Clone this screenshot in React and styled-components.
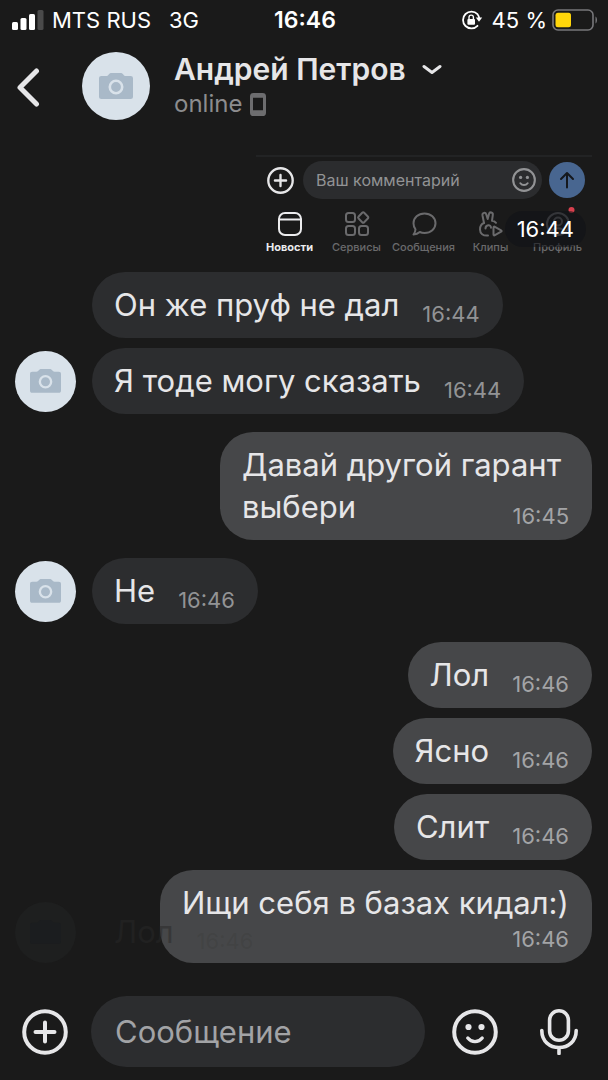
import React, { useState } from 'react';
import styled, { createGlobalStyle } from 'styled-components';

const GlobalStyle = createGlobalStyle`
  * {
    box-sizing: border-box;
  }
  body {
    margin: 0;
    background: #1a1a1a;
    color: #e6e6e8;
    font-family: Inter, "Liberation Sans", sans-serif;
  }
  button {
    padding: 0;
    border: none;
    background: none;
    color: inherit;
    font: inherit;
    cursor: pointer;
  }
  svg {
    display: block;
    flex-shrink: 0;
  }
`;

const Page = styled.div`
  display: flex;
  flex-direction: column;
  min-height: 100vh;
`;

const StatusBar = styled.div`
  display: grid;
  grid-template-columns: 1fr auto 1fr;
  align-items: center;
  height: 40px;
  padding: 0 10px 0 12px;
  color: #fff;
  font-size: 22px;
`;

const StatusGroup = styled.div`
  display: flex;
  align-items: center;
  justify-content: ${props => (props.$end ? 'flex-end' : 'flex-start')};
  gap: ${props => (props.$end ? 5 : 8)}px;
  white-space: nowrap;
`;

const Network = styled.span`
  margin-left: 10px;
`;

const Percent = styled.span`
  margin-left: 4px;
`;

const Clock = styled.span`
  font-size: 23px;
  font-weight: 600;
`;

const Header = styled.header`
  display: flex;
  align-items: center;
  height: 92px;
  padding: 0 16px;
`;

const BackButton = styled.button`
  width: 26px;
  margin-right: 40px;
`;

const Avatar = styled.div`
  display: flex;
  align-items: center;
  justify-content: center;
  flex-shrink: 0;
  width: ${props => props.$size}px;
  height: ${props => props.$size}px;
  border-radius: 50%;
  background: #d9e2ea;
  color: #a9b9c8;
`;

const Peer = styled.div`
  display: flex;
  flex-direction: column;
  margin-left: 24px;
`;

const PeerName = styled.button`
  display: flex;
  align-items: center;
  gap: 16px;
  font-size: 30px;
  font-weight: 600;
  line-height: 36px;
`;

const PeerStatus = styled.div`
  display: flex;
  align-items: center;
  gap: 8px;
  color: #8c8c8e;
  font-size: 24px;
  line-height: 34px;
`;

const History = styled.main`
  display: flex;
  flex: 1;
  flex-direction: column;
  gap: 18px;
  padding: 23px 16px 33px 15px;
`;

const Group = styled.section`
  display: flex;
  flex-direction: column;
  gap: 10px;
`;

const Row = styled.div`
  display: flex;
  align-items: center;
  justify-content: ${props => (props.$out ? 'flex-end' : 'flex-start')};
  gap: 16px;
`;

const AvatarSlot = styled.div`
  flex-shrink: 0;
  width: 61px;
`;

const Bubble = styled.div`
  display: flow-root;
  min-width: ${props => (props.$multiline ? '372px' : 'auto')};
  max-width: 440px;
  padding: 12px 23px 12px 22px;
  border-radius: 33px;
  background: ${props => (props.$out ? '#464749' : '#2c2d2f')};
  font-size: 31px;
  line-height: 42px;
  white-space: pre-line;
`;

const Time = styled.time`
  float: right;
  clear: both;
  margin: ${props => (props.$below ? 3 : 18)}px 0 0 23px;
  color: ${props => (props.$out ? '#a3a4a6' : '#929395')};
  font-size: 22px;
  line-height: 24px;
`;

const LastRow = styled.div`
  position: relative;
  ${Bubble} {
    max-width: 432px;
  }
`;

// previous message of the peer, almost faded out under the last one
const Ghost = styled.div`
  position: absolute;
  left: 0;
  bottom: -2px;
  ${Avatar} {
    background: #1e1f1f;
    color: #1b1d1f;
  }
  ${Bubble} {
    background: none;
    color: rgba(40, 40, 40, 0.5);
  }
  ${Time} {
    color: rgba(40, 40, 40, 0.15);
  }
  circle {
    stroke: none;
  }
`;

const Shot = styled.div`
  position: relative;
  align-self: flex-end;
  width: 336px;
  border-top: 2px solid #222324;
`;

const ShotForm = styled.div`
  display: flex;
  align-items: center;
  padding: 4px 7px 0 10px;
`;

const ShotField = styled.div`
  display: flex;
  flex: 1;
  align-items: center;
  min-width: 0;
  height: 38px;
  margin: 0 7px 0 9px;
  padding: 0 6px 0 13px;
  border-radius: 19px;
  background: #2b2c2e;
  color: #929395;
`;

const ShotInput = styled.input`
  flex: 1;
  min-width: 0;
  padding: 0;
  border: none;
  outline: none;
  background: none;
  color: inherit;
  font: 16px Inter, "Liberation Sans", sans-serif;
  &::placeholder {
    color: #929395;
    opacity: 1;
  }
`;

const SendButton = styled.button`
  display: flex;
  align-items: center;
  justify-content: center;
  flex-shrink: 0;
  width: 36px;
  height: 36px;
  border-radius: 50%;
  background: #486690;
  color: #15181d;
`;

const Tabs = styled.nav`
  display: grid;
  grid-template-columns: repeat(5, 67px);
  margin-top: 12px;
`;

const Tab = styled.a`
  display: flex;
  flex-direction: column;
  align-items: center;
  gap: 3px;
  color: ${props => (props.$active ? '#ececee' : '#6a6a6c')};
  font-size: 11px;
  font-weight: ${props => (props.$active ? 700 : 500)};
  line-height: 14px;
  text-decoration: none;
`;

const ShotTime = styled.time`
  position: absolute;
  right: 6px;
  bottom: 7px;
  padding: 0 12px;
  border-radius: 18px;
  background: rgba(16, 18, 23, 0.6);
  color: #fff;
  font-size: 22px;
  line-height: 36px;
`;

const Composer = styled.form`
  display: flex;
  align-items: center;
  gap: 23px;
  padding: 0 26px 13px 22px;
`;

const ComposerActions = styled.div`
  display: flex;
  gap: 38px;
`;

const MessageInput = styled.input`
  flex: 1;
  min-width: 0;
  height: 71px;
  margin-right: 4px;
  padding: 0 24px;
  border: none;
  border-radius: 36px;
  outline: none;
  background: #2c2d2f;
  color: #e6e6e8;
  font: 31px Inter, "Liberation Sans", sans-serif;
  &::placeholder {
    color: #a2a3a6;
    opacity: 1;
  }
`;

const IconButton = styled.button`
  display: flex;
  align-items: center;
  justify-content: center;
  flex-shrink: 0;
  width: ${props => props.$size || 46}px;
  height: ${props => props.$size || 46}px;
`;

const lineProps = {
  fill: 'none',
  stroke: 'currentColor',
  strokeLinecap: 'round',
  strokeLinejoin: 'round'
};

const SignalIcon = () => (
  <svg width="32" height="20" viewBox="0 0 32 20" fill="#fff">
    <rect x="0" y="12" width="6" height="8" rx="1.5" />
    <rect x="8.5" y="8" width="6" height="12" rx="1.5" />
    <rect x="17" y="4" width="6" height="16" rx="1.5" />
    <rect x="25.5" y="0" width="6" height="20" rx="1.5" fill="#4a4a4a" />
  </svg>
);

const RotationLockIcon = () => (
  <svg width="22" height="20" viewBox="0 0 22 20">
    <path d="M16.5 4.2A8.4 8.4 0 1 0 16.5 15.8M16.5 4.2A8.4 8.4 0 0 1 18.2 8" {...lineProps} strokeWidth="1.8" />
    <path d="M14.8 7.6h6.4L18 11.8z" fill="currentColor" />
    <rect x="6.4" y="9" width="7.6" height="5.8" rx="1" fill="currentColor" />
    <path d="M8 9V7.3a2.2 2.2 0 0 1 4.4 0V9" {...lineProps} strokeWidth="1.4" />
  </svg>
);

const BatteryIcon = () => (
  <svg width="46" height="22" viewBox="0 0 46 22">
    <rect x="1" y="1" width="40" height="20" rx="5" fill="none" stroke="#77777a" strokeWidth="1.6" />
    <rect x="3.5" y="3.7" width="15.5" height="14.6" rx="2.5" fill="#ffd60a" />
    <path d="M43.5 7.5c2 1.2 2 5.8 0 7z" fill="#77777a" />
  </svg>
);

const CameraIcon = ({ width }) => (
  <svg width={width} viewBox="0 0 34 26">
    <path
      fill="currentColor"
      d="M2.500 3H7c1.300 0 1.900-.5 2.700-1.500S11.200 0 12.400 0h9.200c1.200 0 1.900.5 2.700 1.500S25.700 3 27 3h4.500C33.200 3 34 3.800 34 5.500v18c0 1.700-.8 2.500-2.500 2.500h-29C.8 26 0 25.200 0 23.500v-18C0 3.800.8 3 2.500 3z"
    />
    <circle cx="17" cy="14" r="6.200" fill="none" stroke="#d9e2ea" strokeWidth="2.600" />
  </svg>
);

const PlusCircleIcon = ({ size = 46 }) => (
  <svg width={size} height={size} viewBox="0 0 46 46" {...lineProps} strokeWidth="4">
    <circle cx="23" cy="23" r="20.800" />
    <path d="M23 13.500v19M13.500 23h19" />
  </svg>
);

const SmileIcon = ({ size = 46 }) => (
  <svg width={size} height={size} viewBox="0 0 46 46" {...lineProps} strokeWidth="4">
    <circle cx="23" cy="23" r="20.800" />
    <path d="M15.800 29c3.800 4.800 10.600 4.800 14.400 0" strokeWidth="3.400" />
    <circle cx="16.500" cy="18" r="3.100" fill="currentColor" stroke="none" />
    <circle cx="29.500" cy="18" r="3.100" fill="currentColor" stroke="none" />
  </svg>
);

const MicIcon = () => (
  <svg width="40" height="46" viewBox="0 0 40 46" {...lineProps} strokeWidth="3.600">
    <rect x="10.600" y="1.800" width="18.800" height="29.500" rx="9.400" />
    <path d="M2.800 21.500c0 11 8 17 17.200 17s17.200-6 17.200-17M20 38.500v6" />
  </svg>
);

const tabs = [
  {
    label: 'Новости',
    active: true,
    icon: (
      <>
        <rect x="2" y="2" width="22" height="22" rx="6" />
        <path d="M2 8.500h22" />
      </>
    )
  },
  {
    label: 'Сервисы',
    icon: (
      <>
        <rect x="2" y="2" width="9" height="9" rx="2.500" />
        <path d="M18.200 1.800q1-1 2 0l3.600 3.700q1 1 0 2l-3.600 3.700q-1 1-2 0l-3.600-3.700q-1-1 0-2z" />
        <rect x="2" y="15" width="9" height="9" rx="2.500" />
        <rect x="15" y="15" width="9" height="9" rx="2.500" />
      </>
    )
  },
  {
    label: 'Сообщения',
    icon: <path d="M13.500 2.500C19.800 2.500 24.500 6.800 24.500 12.300S19.800 22 13.500 22c-1.800 0-3.300-.3-4.700-1-1.800 1.600-3.800 2.400-6.300 2.500 1.200-1.600 1.900-3.200 2-5.200-1.400-1.700-2-3.700-2-6C2.500 6.800 7.200 2.500 13.500 2.500z" />
  },
  {
    label: 'Клипы',
    icon: (
      <>
        <path d="M6 12 4.500 4.500C4 1.500 7.500.8 8.300 3.500L9.700 8 11 3C11.600.5 15.300 1 14.800 4L14 9.800c1.500.2 3 .8 4 2" />
        <path d="M6 12c-3 1-4 4-4 6.500C2 22.500 5 25 10 24.500M7.500 17.500c0-4 5.500-4.500 5.500-.8" />
        <path d="M15.500 16.500v7c0 .8.700 1.100 1.400.7l6.200-3.500c.7-.4.7-1 0-1.400l-6.200-3.500c-.7-.4-1.400-.1-1.400.7z" />
      </>
    )
  },
  {
    label: 'Профиль',
    icon: (
      <>
        <circle cx="13" cy="13" r="11" />
        <circle cx="13" cy="10.500" r="4" />
        <path d="M6 20.500c3.500-4.500 10.500-4.500 14 0" />
        <circle cx="26.500" cy="-1" r="3" fill="#d8404e" stroke="none" />
      </>
    )
  }
];

const groups = [
  {
    messages: [
      { text: 'Он же пруф не дал', time: '16:44' },
      { text: 'Я тоде могу сказать', time: '16:44', avatar: true }
    ]
  },
  { out: true, messages: [{ text: 'Давай другой гарант\nвыбери', time: '16:45' }] },
  { messages: [{ text: 'Не', time: '16:46', avatar: true }] },
  {
    out: true,
    messages: [
      { text: 'Лол', time: '16:46' },
      { text: 'Ясно', time: '16:46' },
      { text: 'Слит', time: '16:46' },
      { text: 'Ищи себя в базах кидал:)', time: '16:46', below: true, ghost: true }
    ]
  }
];

const PeerAvatar = () => (
  <Avatar $size={61}>
    <CameraIcon width={31} />
  </Avatar>
);

function Message({ message, out }) {
  return (
    <Row $out={out}>
      {!out && <AvatarSlot>{message.avatar && <PeerAvatar />}</AvatarSlot>}
      <Bubble $out={out} $multiline={message.text.includes('\n')}>
        {message.text}
        <Time $out={out} $below={message.below}>{message.time}</Time>
      </Bubble>
    </Row>
  );
}

function Screenshot() {
  return (
    <Shot>
      <ShotForm>
        <IconButton type="button" $size={28} aria-label="Прикрепить">
          <PlusCircleIcon size={27} />
        </IconButton>
        <ShotField>
          <ShotInput placeholder="Ваш комментарий" aria-label="Ваш комментарий" />
          <IconButton type="button" $size={24} aria-label="Эмодзи">
            <SmileIcon size={24} />
          </IconButton>
        </ShotField>
        <SendButton type="button" aria-label="Отправить">
          <svg width="16" height="18" viewBox="0 0 16 18" {...lineProps} strokeWidth="2">
            <path d="M8 16.500V2M2 8l6-6 6 6" />
          </svg>
        </SendButton>
      </ShotForm>
      <Tabs>
        {tabs.map(tab => (
          <Tab key={tab.label} href="#" $active={tab.active}>
            <svg width="26" height="26" viewBox="0 0 26 26" overflow="visible" {...lineProps} strokeWidth="2">
              {tab.icon}
            </svg>
            {tab.label}
          </Tab>
        ))}
      </Tabs>
      <ShotTime>16:44</ShotTime>
    </Shot>
  );
}

export default function App() {
  const [draft, setDraft] = useState('');

  return (
    <Page>
      <GlobalStyle />
      <StatusBar>
        <StatusGroup>
          <SignalIcon />
          <span>MTS RUS</span>
          <Network>3G</Network>
        </StatusGroup>
        <Clock>16:46</Clock>
        <StatusGroup $end>
          <RotationLockIcon />
          <Percent>45 %</Percent>
          <BatteryIcon />
        </StatusGroup>
      </StatusBar>
      <Header>
        <BackButton type="button" aria-label="Назад">
          <svg width="24" height="42" viewBox="0 0 24 42" {...lineProps} strokeWidth="5">
            <path d="M20.500 6 4 22.500 20.500 39" />
          </svg>
        </BackButton>
        <Avatar $size={68}>
          <CameraIcon width={34} />
        </Avatar>
        <Peer>
          <PeerName type="button">
            Андрей Петров
            <svg width="20" height="11" viewBox="0 0 20 11" {...lineProps} strokeWidth="3">
              <path d="M2 2.500l8 6 8-6" />
            </svg>
          </PeerName>
          <PeerStatus>
            online
            <svg width="16" height="23" viewBox="0 0 16 24" preserveAspectRatio="none">
              <path fill="#6d6d6f" fillRule="evenodd" d="M3.500 0h9Q16 0 16 3.500v17q0 3.500-3.500 3.500h-9Q0 24 0 20.500v-17Q0 0 3.500 0zM3 5v13h10V5z" />
            </svg>
          </PeerStatus>
        </Peer>
      </Header>
      <History>
        <Screenshot />
        {groups.map((group, i) => (
          <Group key={i}>
            {group.messages.map(message =>
              message.ghost ? (
                <LastRow key={message.text}>
                  <Message message={message} out />
                  <Ghost>
                    <Message message={{ text: 'Лол', time: '16:46', avatar: true }} />
                  </Ghost>
                </LastRow>
              ) : (
                <Message key={message.text} message={message} out={group.out} />
              )
            )}
          </Group>
        ))}
      </History>
      <Composer onSubmit={e => e.preventDefault()}>
        <IconButton type="button" aria-label="Прикрепить">
          <PlusCircleIcon />
        </IconButton>
        <MessageInput
          placeholder="Сообщение"
          aria-label="Сообщение"
          value={draft}
          onChange={e => setDraft(e.target.value)}
        />
        <ComposerActions>
          <IconButton type="button" aria-label="Эмодзи">
            <SmileIcon />
          </IconButton>
          <IconButton type="button" aria-label="Голосовое сообщение">
            <MicIcon />
          </IconButton>
        </ComposerActions>
      </Composer>
    </Page>
  );
}
